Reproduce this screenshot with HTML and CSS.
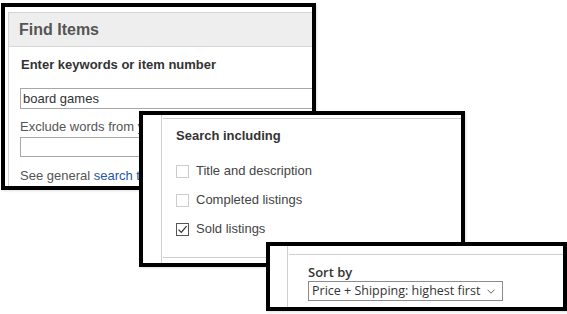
FILE: index.html
```html
<!DOCTYPE html>
<html lang="en">
<head>
<meta charset="utf-8">
<title>Find Items</title>
<link rel="stylesheet" href="styles.css">
</head>
<body>
<div class="canvas">
  <section class="win win-find">
    <div class="module">
      <div class="mod-head">Find Items</div>
      <div class="mod-body">
        <div class="lbl lbl-strong">Enter keywords or item number</div>
        <div class="field field-main">board games</div>
        <div class="lbl lbl-gap">Exclude words from your search</div>
        <div class="field field-small"></div>
        <div class="lbl lbl-tips">See general <a class="link" href="#">search tips</a> and advanced search commands.</div>
      </div>
    </div>
  </section>

  <section class="win win-include">
    <div class="col">
      <div class="sec sec-include">
        <div class="sec-title">Search including</div>
        <ul class="checks">
          <li class="check"><span class="box"></span><span>Title and description</span></li>
          <li class="check"><span class="box"></span><span>Completed listings</span></li>
          <li class="check"><span class="box box-on"><svg width="11" height="11" viewBox="0 0 11 11"><path d="M1.5 5.6 L4.3 8.4 L9.6 2.2" fill="none" stroke="#333" stroke-width="1.3"/></svg></span><span>Sold listings</span></li>
        </ul>
      </div>
    </div>
  </section>

  <section class="win win-sort">
    <div class="col col-sort">
      <div class="sec sec-sort">
        <div class="sort-lbl">Sort by</div>
        <div class="select">
          <span>Price + Shipping: highest first</span>
          <svg class="chev" width="8" height="5" viewBox="0 0 8 5"><path d="M0.5 0.7 L4 4.2 L7.5 0.7" fill="none" stroke="#666" stroke-width="1"/></svg>
        </div>
      </div>
    </div>
  </section>
</div>
</body>
</html>
```

FILE: styles.css
```css
html, body {
  margin: 0;
  padding: 0;
  background: #fff;
}

.canvas {
  position: relative;
  width: 567px;
  height: 314px;
  overflow: hidden;
  font-family: "Liberation Sans", Arial, sans-serif;
  font-size: 13px;
  color: #444;
}

.win {
  position: absolute;
  box-sizing: border-box;
  border: 4px solid #000;
  background: #fff;
  overflow: hidden;
  box-shadow: 1px 1px 2px rgba(0, 0, 0, 0.12);
}

/* Panel 1 */
.win-find {
  left: 1px;
  top: 3px;
  width: 315px;
  height: 187px;
  z-index: 1;
}

.module {
  margin: 5px 0 0 3px;
  border-left: 1px solid #d4d4d4;
  border-top: 1px solid #d4d4d4;
  width: 600px;
  height: 300px;
}

.mod-head {
  background: #eeeeee;
  padding: 1px 0 0 10px;
  line-height: 32px;
  height: 32px;
  border-bottom: 1px solid #d8d8d8;
  font-size: 16px;
  font-weight: bold;
  color: #555;
}

.mod-body {
  padding: 10px 0 0 11px;
}

.lbl {
  line-height: 16px;
  color: #555;
  white-space: nowrap;
}

.lbl-strong {
  font-weight: bold;
  color: #333;
  padding-left: 1px;
}

.lbl-gap {
  margin-top: 10px;
}

.lbl-tips {
  margin-top: 11px;
}

.link {
  color: #1f56ad;
  text-decoration: none;
}

.field {
  box-sizing: border-box;
  width: 420px;
  border: 1px solid #a8a8a8;
  background: #fff;
  color: #333;
  padding: 1px 0 0 2px;
}

.field-main {
  margin-top: 15px;
  height: 21px;
  line-height: 18px;
}

.field-small {
  margin-top: 2px;
  height: 20px;
}

/* Panel 2 */
.win-include {
  left: 139px;
  top: 111px;
  width: 326px;
  height: 156px;
  z-index: 2;
}

.col {
  box-sizing: border-box;
  height: 100%;
  margin-left: 18px;
  border-left: 1px solid #cfcfcf;
  padding: 3px 0 0 1px;
}

.sec {
  box-sizing: border-box;
  border-top: 1px solid #cfcfcf;
}

.sec-include {
  height: 140px;
  border-bottom: 1px solid #cfcfcf;
  padding: 9px 0 0 13px;
}

.sec-title {
  line-height: 16px;
  font-weight: bold;
  color: #333;
}

.checks {
  list-style: none;
  margin: 19px 0 0;
  padding: 0;
  display: flex;
  flex-direction: column;
  gap: 13px;
}

.check {
  display: flex;
  align-items: center;
  gap: 7px;
  line-height: 16px;
  height: 16px;
  color: #444;
}

.box {
  box-sizing: border-box;
  width: 13px;
  height: 13px;
  border: 1px solid #cccccc;
  background: #fff;
  display: flex;
  align-items: center;
  justify-content: center;
}

.box-on {
  border-color: #555;
}

/* Panel 3 */
.win-sort {
  left: 266px;
  top: 242px;
  width: 301px;
  height: 69px;
  z-index: 3;
}

.col-sort {
  margin-left: 17px;
  padding-top: 8px;
}

.sec-sort {
  padding: 9px 0 0 19px;
  font-family: "Open Sans", "Noto Sans", sans-serif;
  color: #333;
}

.sort-lbl {
  font-weight: 600;
  line-height: 16px;
  font-size: 13px;
}

.select {
  box-sizing: border-box;
  margin-top: 1px;
  width: 195px;
  height: 20px;
  border: 1px solid #8c8c8c;
  display: flex;
  align-items: center;
  justify-content: space-between;
  padding: 0 7px 0 3px;
  font-size: 12.5px;
  line-height: 18px;
  white-space: nowrap;
}

.chev {
  flex: none;
}
```
